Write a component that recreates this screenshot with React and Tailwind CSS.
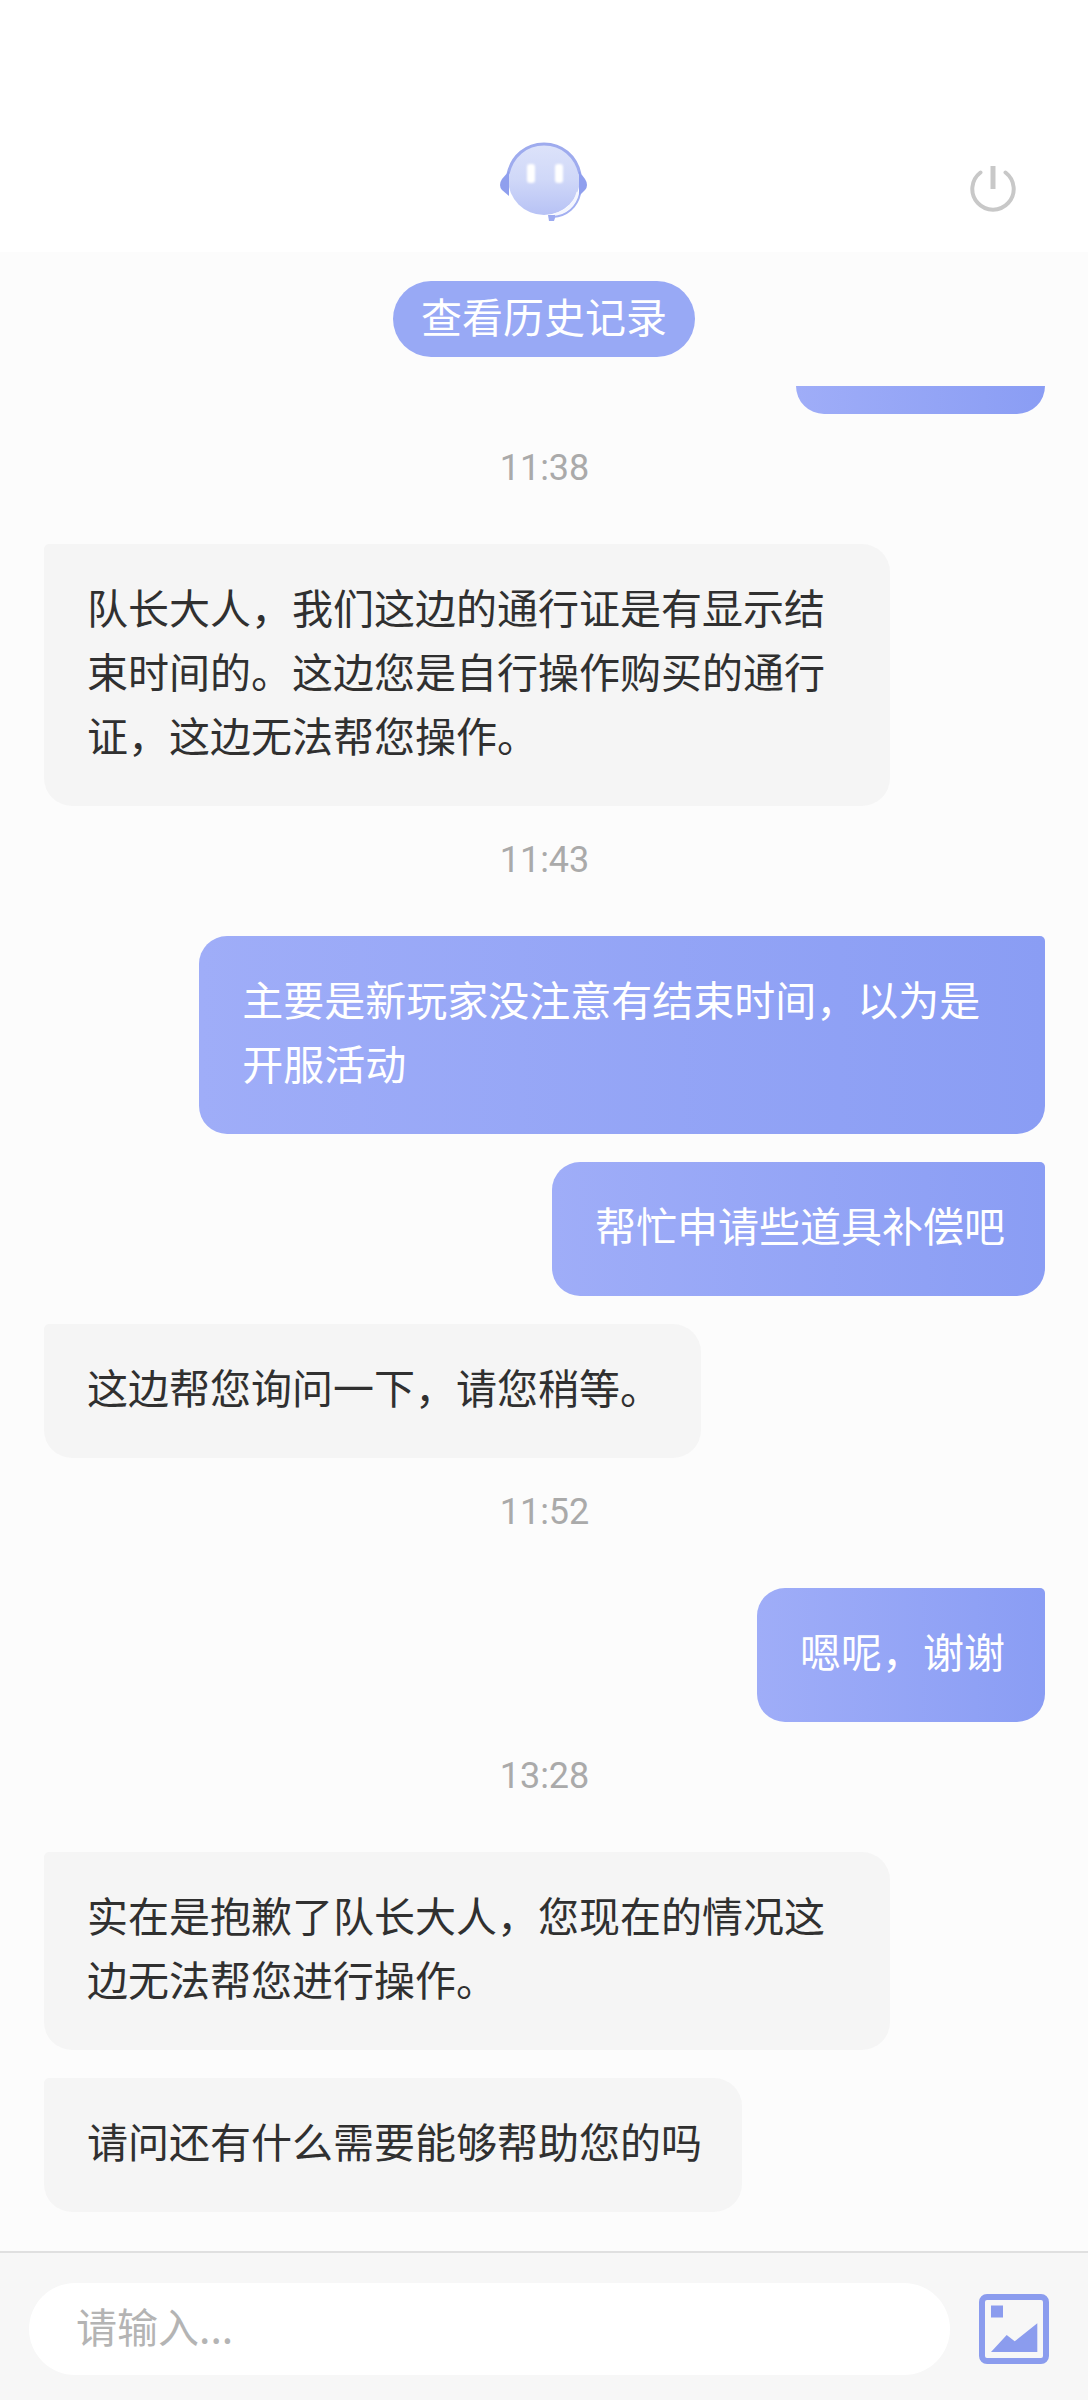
import { useState } from "react";
import clsx from "clsx";

const messages = [
  { type: "time", text: "11:38" },
  {
    type: "agent",
    text: "队长大人，我们这边的通行证是有显示结束时间的。这边您是自行操作购买的通行证，这边无法帮您操作。",
  },
  { type: "time", text: "11:43" },
  { type: "user", text: "主要是新玩家没注意有结束时间，以为是开服活动" },
  { type: "user", text: "帮忙申请些道具补偿吧" },
  { type: "agent", text: "这边帮您询问一下，请您稍等。" },
  { type: "time", text: "11:52" },
  { type: "user", text: "嗯呢，谢谢" },
  { type: "time", text: "13:28" },
  { type: "agent", text: "实在是抱歉了队长大人，您现在的情况这边无法帮您进行操作。" },
  { type: "agent", text: "请问还有什么需要能够帮助您的吗" },
];

function RobotLogo() {
  return (
    <svg viewBox="0 0 88 82" className="h-[82px] w-[88px]" aria-hidden="true">
      <defs>
        <linearGradient id="face" x1="0" y1="0" x2="0" y2="1">
          <stop offset="0" stopColor="#dde3fa" />
          <stop offset="0.5" stopColor="#d0d8f8" />
          <stop offset="1" stopColor="#b7c2f5" />
        </linearGradient>
        <filter id="soft" x="-50%" y="-50%" width="200%" height="200%">
          <feGaussianBlur stdDeviation="1.2" />
        </filter>
      </defs>
      <ellipse cx="44" cy="39" rx="36" ry="36" fill="url(#face)" />
      {/* headband */}
      <path d="M8 34C12 16 26 4 44 4s32 12 36 30" fill="none" stroke="#9eabee" strokeWidth="3" />
      {/* microphone */}
      <path d="M78 52C75 64 66 72 54 75" fill="none" stroke="#f4f6fe" strokeWidth="3" />
      <path d="M80 54C77 67 67 76 53 77" fill="none" stroke="#a3b0f1" strokeWidth="2" />
      <path d="M48 75h7v3l-1 3h-5z" fill="#9dabf0" />
      {/* ear cups */}
      <path d="M9 31L2 39q-2 3-2 6t2 5l7 6z" fill="#8f9fee" />
      <path d="M79 31l6 8q2 3 2 6t-2 5l-6 6z" fill="#8f9fee" />
      <g fill="#fff" filter="url(#soft)">
        <rect x="27" y="24" width="8" height="19" rx="3" />
        <rect x="55" y="24" width="8" height="19" rx="3" />
      </g>
    </svg>
  );
}

function PowerIcon() {
  return (
    <svg viewBox="0 0 46 46" className="size-[46px]" fill="none" stroke="#c8c8c8" strokeWidth="4">
      <path d="M10.5 6.5a20.7 20.7 0 1 0 25 0" strokeLinecap="round" />
      <path d="M23 0v23" strokeWidth="5" />
    </svg>
  );
}

function ImageIcon() {
  return (
    <svg viewBox="0 0 70 70" className="size-[70px]" fill="#8b9cee">
      <rect x="3" y="3" width="64" height="64" rx="5" fill="none" stroke="#8b9cee" strokeWidth="6" />
      <rect x="12" y="11.5" width="12" height="12" />
      <path d="M12 58l15.7-17 8 6.3 22.6-18V58z" />
    </svg>
  );
}

function Message({ type, text }) {
  if (type === "time") {
    return (
      <time className="self-center pb-[22px] font-['Roboto',sans-serif] text-[36px] leading-[52px] text-[#aaaaaa]">
        {text}
      </time>
    );
  }

  return (
    <div
      className={clsx(
        "max-w-[84.5%] rounded-[28px] pt-[30px] pr-10 pb-10 pl-[43px] text-[41px] leading-[64px]",
        type === "agent" && "self-start rounded-tl-[5px] bg-[#f5f5f5] text-[#303030]",
        type === "user" &&
          "self-end rounded-tr-[5px] bg-linear-to-r from-[#9fadf8] to-[#8a9df4] text-white",
      )}
    >
      {text}
    </div>
  );
}

export default function App() {
  const [draft, setDraft] = useState("");

  return (
    <div className="flex min-h-screen flex-col bg-[#fcfcfc] font-['Noto_Sans_CJK_SC',sans-serif]">
      <header className="grid grid-cols-3 items-end bg-white px-[72px] pt-[140px] pb-[30px]">
        <div className="col-start-2 justify-self-center">
          <RobotLogo />
        </div>
        <button type="button" aria-label="结束会话" className="mb-[10px] justify-self-end">
          <PowerIcon />
        </button>
      </header>

      <div className="flex justify-center py-[29px]">
        <button
          type="button"
          className="rounded-full bg-[#98a9f5] px-7 pt-0.5 pb-2.5 text-[41px] leading-[64px] text-white"
        >
          查看历史记录
        </button>
      </div>

      <main className="flex flex-1 flex-col gap-7 pr-[43px] pb-[39px] pl-11">
        {/* tail of the message scrolled under the history bar */}
        <div className="h-7 w-[249px] self-end rounded-b-[28px] bg-linear-to-r from-[#9fadf8] to-[#8a9df4]" />
        {messages.map((message, i) => (
          <Message key={i} {...message} />
        ))}
      </main>

      <footer className="flex items-center gap-[29px] border-t-2 border-[#e0e0e0] bg-[#f7f7f7] pt-[30px] pr-[39px] pb-[25px] pl-[29px]">
        <input
          type="text"
          aria-label="请输入"
          value={draft}
          onChange={(e) => setDraft(e.target.value)}
          placeholder="请输入..."
          className="h-[92px] min-w-0 flex-1 rounded-full bg-white px-[47px] pb-2 text-[41px] text-[#303030] outline-none placeholder:text-[#b4b4b4]"
        />
        <button type="button" aria-label="发送图片">
          <ImageIcon />
        </button>
      </footer>
    </div>
  );
}
